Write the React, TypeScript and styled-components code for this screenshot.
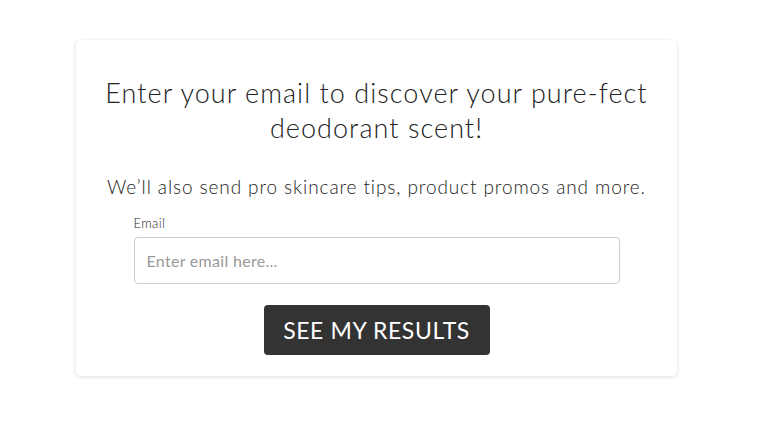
import styled, { createGlobalStyle } from 'styled-components';

const GlobalStyle = createGlobalStyle`
    html, body {
        margin: 0;
        padding: 0;
        background: #fff;
    }
    body {
        font-family: Lato, "Open Sans", sans-serif;
        color: #333;
    }
`;

const Page = styled.div`
    width: 760px;
    height: 438px;
    padding-top: 40px;
    padding-left: 76px;
    box-sizing: border-box;
`;

const Card = styled.div`
    width: 601px;
    box-sizing: border-box;
    background: #fff;
    border-radius: 5px;
    box-shadow: 0 1px 4px rgba(0, 0, 0, 0.14);
    padding: 35px 20px 21px;
    display: flex;
    flex-direction: column;
    align-items: center;
`;

const Title = styled.h2`
    margin: 0;
    font-size: 27px;
    line-height: 35px;
    font-weight: 300;
    letter-spacing: 1.05px;
    text-align: center;
    color: #222;
    max-width: 570px;
`;

const Subtitle = styled.p`
    margin: 30px 0 0;
    font-size: 19px;
    line-height: 24px;
    font-weight: 300;
    letter-spacing: 0.9px;
    color: #222;
    white-space: nowrap;
`;

const Field = styled.label`
    width: 486px;
    margin-top: 16px;
    display: flex;
    flex-direction: column;
    gap: 6px;
`;

const Label = styled.span`
    font-size: 13px;
    line-height: 16px;
    font-weight: 300;
    letter-spacing: 0.4px;
    color: #222;
`;

const Input = styled.input`
    height: 47px;
    box-sizing: border-box;
    border: 1px solid #ccc;
    border-radius: 4px;
    padding: 0 12px;
    font-family: inherit;
    font-size: 16px;
    letter-spacing: 0.3px;
    color: #333;
    outline: none;
    &::placeholder {
        color: #999;
    }
`;

const Button = styled.button`
    margin-top: 21px;
    height: 50px;
    width: 226px;
    padding: 0;
    border: none;
    border-radius: 4px;
    background: #333;
    color: #fff;
    font-family: inherit;
    font-size: 23px;
    font-weight: 400;
    letter-spacing: 0.6px;
    cursor: pointer;
`;

export default function App() {
    return <>
        <GlobalStyle />
        <Page>
            <Card>
                <Title>Enter your email to discover your pure-fect deodorant scent!</Title>
                <Subtitle>We’ll also send pro skincare tips, product promos and more.</Subtitle>
                <Field>
                    <Label>Email</Label>
                    <Input type='email' placeholder='Enter email here...' />
                </Field>
                <Button>SEE MY RESULTS</Button>
            </Card>
        </Page>
    </>;
}
